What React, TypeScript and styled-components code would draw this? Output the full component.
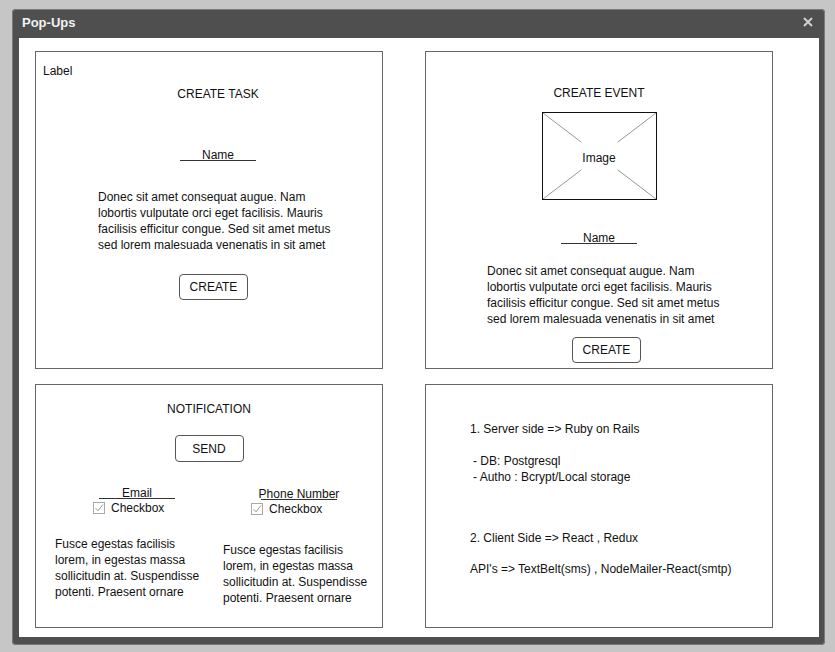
import React from "react";
import styled, { createGlobalStyle } from "styled-components";

/* Global ------------------------------------------------------------------- */
const GlobalStyle = createGlobalStyle`
  html, body {
    margin: 0;
    padding: 0;
    background: #c6c6c6;
  }
  body {
    font-family: "Liberation Sans", Arial, Helvetica, sans-serif;
    color: #111;
    font-size: 12px;
  }
`

/* Window ------------------------------------------------------------------- */
const Page = styled.div`
    width: 835px;
    height: 652px;
    box-sizing: border-box;
    padding: 9px 10px 7px 12px;
    display: flex;
`

const Window = styled.div`
    width: 813px;
    height: 636px;
    background: #4f4f4f;
    border-radius: 4px;
    box-shadow: inset 0 0 0 1px #7a7a7a;
    display: flex;
    flex-direction: column;
`

const TitleBar = styled.div`
    height: 29px;
    display: flex;
    align-items: center;
    justify-content: space-between;
    padding: 0 12px 3px 10px;
    box-sizing: border-box;

    h1 {
      margin: 0;
      font-size: 13px;
      font-weight: bold;
      color: #f2f2f2;
    }
`

const CloseButton = styled.div`
    width: 10px;
    height: 10px;
    display: flex;
    cursor: pointer;
`

const Content = styled.div`
    flex: 1;
    margin: 0 6px 8px 7px;
    background: #ffffff;
    padding: 13px 0 0 16px;
    box-sizing: border-box;
    display: grid;
    grid-template-columns: 348px 348px;
    grid-template-rows: 318px 244px;
    column-gap: 42px;
    row-gap: 15px;
`

/* Panels ------------------------------------------------------------------- */
const Panel = styled.div<{ $shift?: number }>`
    border: 1px solid #666;
    box-sizing: border-box;
    display: flex;
    flex-direction: column;
    align-items: center;
    padding-left: ${p => (p.$shift ?? 0) * 2}px;
`

const Text = styled.div<{ $top?: number }>`
    line-height: 16px;
    margin-top: ${p => p.$top ?? 0}px;
    white-space: nowrap;
`

const Label = styled(Text)`
    align-self: flex-start;
    margin-left: 7px;
`

const NameField = styled.div<{ $top?: number }>`
    width: 76px;
    height: 13px;
    line-height: 16px;
    border-bottom: 1px solid #333;
    display: flex;
    justify-content: center;
    white-space: nowrap;
    margin-top: ${p => p.$top ?? 0}px;
`

const Paragraph = styled.p<{ $top?: number; $width?: number }>`
    margin: ${p => p.$top ?? 0}px 0 0 0;
    width: ${p => p.$width ?? 240}px;
    line-height: 16px;
`

const Button = styled.button<{ $top?: number; $height?: number }>`
    width: 69px;
    height: ${p => p.$height ?? 26}px;
    margin-top: ${p => p.$top ?? 0}px;
    border: 1px solid #555;
    border-radius: 4px;
    background: #fff;
    font-family: "Liberation Sans", Arial, sans-serif;
    font-size: 12px;
    color: #111;
    padding: 0;
`

/* Image placeholder -------------------------------------------------------- */
const ImageBox = styled.div<{ $top?: number }>`
    position: relative;
    width: 115px;
    height: 88px;
    margin-top: ${p => p.$top ?? 0}px;
    border: 1px solid #111;
    box-sizing: border-box;

    svg {
      display: block;
    }

    span {
      position: absolute;
      inset: 0;
      display: flex;
      align-items: center;
      justify-content: center;
      font-size: 12px;
      padding-top: 4px;
    }
`

function ImagePlaceholder({ top }: { top: number }) {
    const w = 113, h = 86, cx = w / 2, cy = h / 2, k = 0.68
    const seg = (x: number, y: number) => (
        <line x1={x} y1={y} x2={x + (cx - x) * k} y2={y + (cy - y) * k} stroke="#999" strokeWidth="1" />
    )
    return (
        <ImageBox $top={top}>
            <svg width={w} height={h} viewBox={`0 0 ${w} ${h}`}>
                {seg(0, 0)}
                {seg(w, 0)}
                {seg(0, h)}
                {seg(w, h)}
            </svg>
            <span>Image</span>
        </ImageBox>
    )
}

/* Notification ------------------------------------------------------------- */
const OptionsRow = styled.div`
    align-self: stretch;
    display: flex;
    margin-top: 23px;
    padding-left: 19px;
`

const OptionColumn = styled.div<{ $width: number; $top?: number }>`
    width: ${p => p.$width}px;
    margin-top: ${p => p.$top ?? 0}px;
    display: flex;
    flex-direction: column;
    align-items: flex-start;
`

const Indented = styled.div<{ $left: number }>`
    margin-left: ${p => p.$left}px;
`

const CheckRow = styled.div<{ $left: number }>`
    display: flex;
    align-items: center;
    gap: 6px;
    height: 14px;
    margin-top: 2px;
    margin-left: ${p => p.$left}px;
    line-height: 14px;
`

const CheckBox = styled.span`
    width: 12px;
    height: 12px;
    border: 1px solid #aaa;
    box-sizing: border-box;
    display: flex;
`

function Checkbox() {
    return (
        <CheckBox>
            <svg width="10" height="10" viewBox="0 0 10 10">
                <path d="M1.5 5.2 L4 7.8 L9 1.5" fill="none" stroke="#999" strokeWidth="1" />
            </svg>
        </CheckBox>
    )
}

interface OptionProps {
    label: string
    width: number
    top: number
    labelLeft: number
    checkLeft: number
    paraTop: number
}

function NotifyOption(props: OptionProps) {
    return (
        <OptionColumn $width={props.width} $top={props.top}>
            <Indented $left={props.labelLeft}>
                <NameField>{props.label}</NameField>
            </Indented>
            <CheckRow $left={props.checkLeft}>
                <Checkbox />
                <span>Checkbox</span>
            </CheckRow>
            <Paragraph $top={props.paraTop} $width={150}>
                Fusce egestas facilisis lorem, in egestas massa sollicitudin at. Suspendisse potenti. Praesent ornare
            </Paragraph>
        </OptionColumn>
    )
}

/* Notes -------------------------------------------------------------------- */
const Notes = styled.div`
    align-self: stretch;
    padding-left: 44px;
    display: flex;
    flex-direction: column;
`

const NoteLine = styled(Text)<{ $indent?: boolean }>`
    padding-left: ${p => (p.$indent ? 3 : 0)}px;
`

/* Component ---------------------------------------------------------------- */
const lorem = "Donec sit amet consequat augue. Nam lobortis vulputate orci eget facilisis. Mauris facilisis efficitur congue. Sed sit amet metus sed lorem malesuada venenatis in sit amet"

export default function App() {
    return (
        <>
            <GlobalStyle />
            <Page>
                <Window>
                    <TitleBar>
                        <h1>Pop-Ups</h1>
                        <CloseButton>
                            <svg width="10" height="10" viewBox="0 0 10 10">
                                <path d="M1 1 L9 9 M9 1 L1 9" stroke="#d0d0d0" strokeWidth="2" />
                            </svg>
                        </CloseButton>
                    </TitleBar>
                    <Content>
                        <Panel $shift={9}>
                            <Label $top={11} style={{ marginLeft: -11 }}>Label</Label>
                            <Text $top={7}>CREATE TASK</Text>
                            <NameField $top={45}>Name</NameField>
                            <Paragraph $top={28}>{lorem}</Paragraph>
                            <Button $top={21} style={{ marginRight: 9 }}>CREATE</Button>
                        </Panel>

                        <Panel>
                            <Text $top={33}>CREATE EVENT</Text>
                            <ImagePlaceholder top={11} />
                            <NameField $top={30}>Name</NameField>
                            <Paragraph $top={19} style={{ marginLeft: 16 }}>{lorem}</Paragraph>
                            <Button $top={10} style={{ marginLeft: 15 }}>CREATE</Button>
                        </Panel>

                        <Panel>
                            <Text $top={16}>NOTIFICATION</Text>
                            <Button $top={18} $height={27}>SEND</Button>
                            <OptionsRow>
                                <NotifyOption label="Email" width={169} top={0} labelLeft={44} checkLeft={38} paraTop={21} />
                                <NotifyOption label="Phone Number" width={160} top={1} labelLeft={38} checkLeft={28} paraTop={26} />
                            </OptionsRow>
                        </Panel>

                        <Panel>
                            <Notes>
                                <NoteLine $top={36}>1. Server side =&gt; Ruby on Rails</NoteLine>
                                <NoteLine $top={16} $indent>- DB: Postgresql</NoteLine>
                                <NoteLine $indent>- Autho : Bcrypt/Local storage</NoteLine>
                                <NoteLine $top={45}>2. Client Side =&gt; React , Redux</NoteLine>
                                <NoteLine $top={15}>API's =&gt; TextBelt(sms) , NodeMailer-React(smtp)</NoteLine>
                            </Notes>
                        </Panel>
                    </Content>
                </Window>
            </Page>
        </>
    )
}
